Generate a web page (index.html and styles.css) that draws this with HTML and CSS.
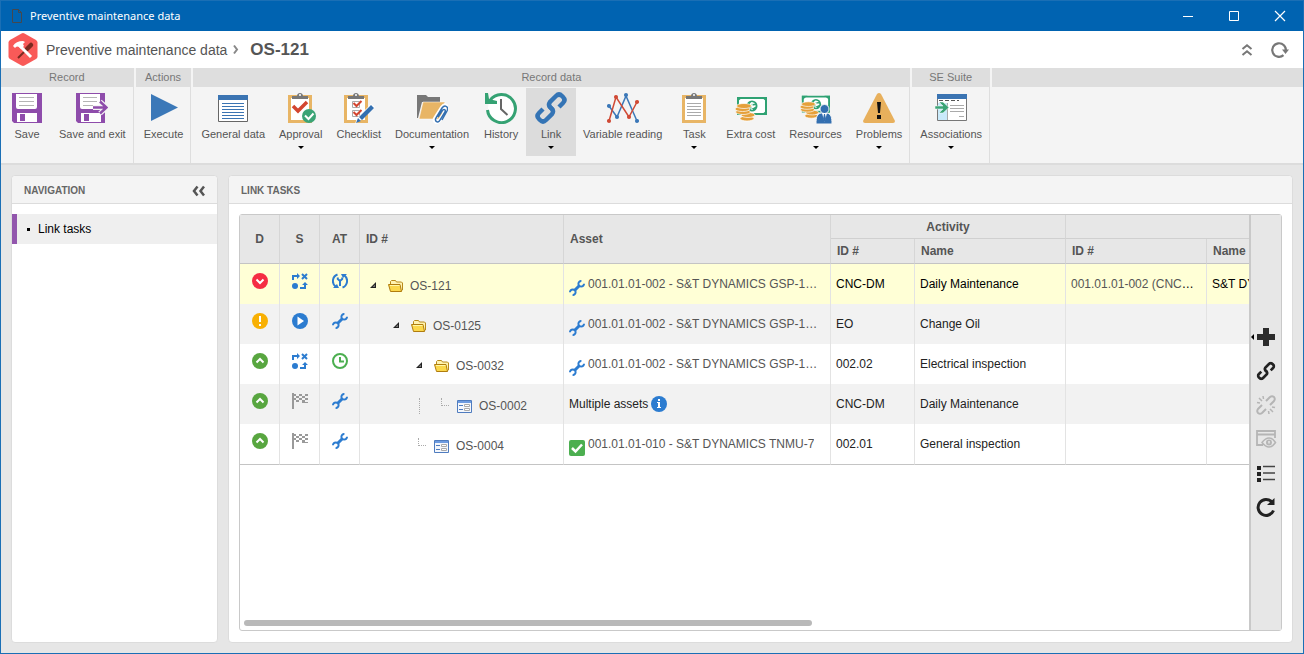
FILE: index.html
```html
<!DOCTYPE html>
<html lang="en">
<head>
<meta charset="utf-8">
<title>Preventive maintenance data</title>
<link rel="stylesheet" href="styles.css">
</head>
<body>
<svg class="sprite" aria-hidden="true">
  <symbol id="floppy" viewBox="0 0 32 32"><path fill="#8e4cab" d="M1 1h30v30H3l-2-2z"/><path fill="#fff" d="M5 2h21v13a2 2 0 0 1-2 2H7a2 2 0 0 1-2-2zM6 21h20v9H6z"/><path stroke="#b5b5b5" d="M8 5.500h15M8 9.500h15M8 13.500h15"/><path fill="#8e4cab" d="M9 22h5v7H9z"/></symbol>
  <symbol id="floppy-exit" viewBox="0 0 32 32"><path fill="#8e4cab" d="M0 1h29v30H2l-2-2z"/><path fill="#fff" d="M4 2h20v13a2 2 0 0 1-2 2H6a2 2 0 0 1-2-2zM5 21h20v9H5z"/><path stroke="#b5b5b5" d="M7 5.500h14M7 9.500h14M7 13.500h10"/><path fill="#8e4cab" d="M8 22h5v7H8z"/><path d="M17 15.500h13M24 9.500l6.500 6-6.500 6" fill="none" stroke="#f4f4f4" stroke-width="5"/><path d="M17 15.500h13M24 9.500l6.500 6-6.500 6" fill="none" stroke="#8e4cab" stroke-width="2.500"/></symbol>
  <symbol id="play" viewBox="0 0 32 32"><path fill="#3b78b8" d="M3 2l27 13.500L3 29z"/></symbol>
  <symbol id="general" viewBox="0 0 32 32"><path fill="#fff" stroke="#666" d="M1.500 3.500h29v26h-29z"/><path fill="#3b74b2" d="M1 3h30v5H1z"/><path stroke="#3b74b2" d="M5 11.500h22M5 14.500h22M5 17.500h22M5 20.500h22M5 23.500h22M5 26.500h22"/></symbol>
  <symbol id="board" viewBox="0 0 32 32"><path fill="#fff" stroke="#e8b565" stroke-width="3" d="M5.500 4.500h21v25h-21z"/><path fill="#777" d="M8 7V4h5c0-4 6-4 6 0h5v3z"/><circle cx="16" cy="3" r="1" fill="#fff"/></symbol>
  <symbol id="task" viewBox="0 0 32 32"><use href="#board"/><path stroke="#aaa" d="M9 11.500h14M9 14.500h14M9 17.500h14M9 20.500h14M9 23.500h14"/></symbol>
  <symbol id="approval" viewBox="0 0 32 32"><use href="#board" x="-1"/><path d="M8 14l5 5 9-9" fill="none" stroke="#d3452f" stroke-width="3.500"/><circle cx="24" cy="24" r="7" fill="#3ba476"/><path d="M20 23.500l3.500 3.500 5-5.500" fill="none" stroke="#fff" stroke-width="2"/></symbol>
  <symbol id="checklist" viewBox="0 0 32 32"><use href="#board" x="-3"/><path d="M9.500 9.500h7v6h-7zM9.500 18.500h7v6h-7z" fill="#fff" stroke="#aaa"/><path d="M10.500 11l3 3 5-5M10.500 20l3 3 5-5" fill="none" stroke="#d3452f" stroke-width="2"/><path d="M12 32l2-6L28 12l4 3-14 13z" fill="#fff"/><path d="M13 31l2-5 3 3zM16 25l12-12 3 3-12 12z" fill="#336fb0"/></symbol>
  <symbol id="docs" viewBox="0 0 32 32"><path fill="#777" d="M1 3h9l2 2h12v5H6L2 26H1z"/><path fill="#e8b565" stroke="#fff" stroke-width=".5" d="M7 10h22l-4 17H3z"/><path d="M20 25l5-7c2-3 5 0 3.500 3L23 29c-2 3-6 0-4-3l7-11c3-4 6-1 5 2l-5 9" fill="none" stroke="#fff" stroke-width="3.500"/><path d="M22 25l4-6c2-3 4-1 3 1l-5 8c-2 4-6 1-4-2l6-10c3-4 7-1 5 3l-5 9" fill="none" stroke="#336fb0" stroke-width="1.500"/></symbol>
  <symbol id="history" viewBox="0 0 32 32"><circle cx="16.500" cy="16" r="13.500" fill="#fff"/><path d="M5 8.500A14 14 0 1 1 2.500 18" fill="none" stroke="#35a273" stroke-width="3"/><path fill="#35a273" d="M0 1h3l1 6 8 2v3H0z"/><path d="M16 7v10l6.500 6" fill="none" stroke="#666" stroke-width="2"/></symbol>
  <symbol id="link" viewBox="0 0 32 32"><g fill="none" stroke="currentColor" stroke-width="4.500"><path d="M18 18l-3-3q-2-2 0-5l6-6q3-3 6 0l1 1q3 3 0 6l-4 4"/><path d="M14 14l3 3q2 2 0 5l-6 6q-3 3-6 0l-1-1q-3-3 0-6l4-4"/></g></symbol>
  <symbol id="chart" viewBox="0 0 32 32"><g fill="#3b78b8" stroke="#3b78b8" stroke-width="1.500"><path fill="none" d="M2 14l8 11L19 4l11 25"/><circle cx="2" cy="14" r="1.300"/><circle cx="10" cy="25" r="1.300"/><circle cx="19" cy="3" r="1.300"/><circle cx="30" cy="29" r="1.300"/></g><g fill="#d04a35" stroke="#d04a35" stroke-width="1.500"><path fill="none" d="M2 29L9 5l13 20 8-15"/><circle cx="2" cy="29" r="1.300"/><circle cx="9" cy="5" r="1.300"/><circle cx="22" cy="25" r="1.300"/><circle cx="30" cy="10" r="1.300"/></g></symbol>
  <symbol id="cash" viewBox="0 0 32 32"><path fill="#fff" stroke="#2fa273" stroke-width="2" d="M3 6h28v16H3z"/><path fill="#2fa273" d="M2 5h6l-6 5zM26 5h6v5zM32 18v5h-6z"/><circle cx="17" cy="14" r="5.500" fill="#2fa273"/><path d="M19.500 11.500q-4-1.500-4 .8t3.500 1.700-3.500 2.500M17 10v8" fill="none" stroke="#fff" stroke-width="1.200"/><g fill="#e5a03a" stroke="#fff" stroke-width=".7"><ellipse cx="12" cy="26.500" rx="7" ry="2.500"/><ellipse cx="13" cy="23" rx="7" ry="2.500"/><ellipse cx="8" cy="20" rx="7.500" ry="2.500"/><ellipse cx="7.500" cy="17" rx="7.500" ry="2.500"/><ellipse cx="9" cy="14" rx="7.500" ry="2.500"/></g></symbol>
  <symbol id="resources" viewBox="0 0 32 32"><use href="#cash" y="-2" width="30" height="32"/><g stroke="#f4f4f4"><path fill="#336fb0" d="M16 32c0-7 1-10 5-11h6c4 1 5 4 5 11z"/><circle cx="24.500" cy="17" r="4.500" fill="#336fb0"/></g><path fill="#fff" d="M22 21h5l-2.500 9z"/><path fill="#336fb0" d="M24 22h1l1 5-1.500 3-1.500-3z"/></symbol>
  <symbol id="warning" viewBox="0 0 32 32"><path fill="#e8b05c" d="M14 2q2-2 4 0l14 27q0 2-2 2H2q-2 0-2-2z"/><path fill="#111" d="M14 10h4l-1 11h-2zM14 23h4v4h-4z"/></symbol>
  <symbol id="assoc" viewBox="0 0 32 32"><path fill="#fff" stroke="#777" d="M2.500 2.500h29v26h-29z"/><path fill="#3b74b2" d="M2 2h30v5H2z"/><path fill="#c9eafb" d="M3 11h9v17H3z"/><path stroke="#555" stroke-dasharray="4 2" d="M4 8.500h20"/><path stroke="#aaa" d="M15 13.500h14M15 16.500h14M15 19.500h14M12.500 11v17M24 24.500h5"/><path fill="#3ba476" stroke="#fff" stroke-width=".5" d="M0 14h8l-4-4h4l6 5.500L8 21H4l4-4H0z"/></symbol>
  <symbol id="wrench" viewBox="0 0 16 16"><g fill="none" stroke="#2c7cd0"><path d="M5.500 10.500l5-5" stroke-width="3"/><path d="M12.400 1A2.800 2.800 0 1 0 15 3.700M3.600 15A2.800 2.800 0 1 0 1 12.300" stroke-width="2"/></g></symbol>
  <symbol id="high" viewBox="0 0 16 16"><circle cx="8" cy="8" r="8" fill="#f52d43"/><path d="M4.500 6.500L8 10l3.500-3.500" fill="none" stroke="#fff" stroke-width="2"/></symbol>
  <symbol id="medium" viewBox="0 0 16 16"><circle cx="8" cy="8" r="8" fill="#f8b003"/><path fill="#fff" d="M7 3h2v6H7zM7 11h2v2H7z"/></symbol>
  <symbol id="low" viewBox="0 0 16 16"><circle cx="8" cy="8" r="8" fill="#58a640"/><path d="M4.500 9.500L8 6l3.500 3.500" fill="none" stroke="#fff" stroke-width="2"/></symbol>
  <symbol id="flow" viewBox="0 0 16 16"><g fill="none" stroke="#2c7cd0" stroke-width="2"><path d="M1 7V3h5M10 1l5 5M15 1l-5 5M8 15h5v-4"/></g><path fill="#2c7cd0" d="M5 0l3 3-3 3zM10 12l3-3 3 3z"/><circle cx="3" cy="13" r="3" fill="#2c7cd0"/></symbol>
  <symbol id="started" viewBox="0 0 16 16"><circle cx="8" cy="8" r="8" fill="#2c7cd0"/><path fill="#fff" d="M5.500 3.500v9L12 8z"/></symbol>
  <symbol id="flag" viewBox="0 0 16 16"><g fill="#9a9a9a"><path d="M0 0h2v16H0z"/><path d="M2 1h2v2H2zM2 5h2v2H2zM4 3h3v2H4zM7 1h3v2H7zM7 5h3v2H7zM10 3h3v2h-3zM13 1h3v2h-3zM13 5h3v2h-3zM4 7h3v2H4zM10 7h3v3h-3zM13 9h3v1h-3z"/></g></symbol>
  <symbol id="cycle" viewBox="0 0 16 16"><g fill="none" stroke="#2c7cd0" stroke-width="2"><path d="M5.500 1.500A7 7 0 0 0 3.500 13.500M10.500 14.500A7 7 0 0 0 12.500 2.500"/><path d="M5.800 4.500v1.500L8 8l2.200-2V4.500M8 8v5"/></g><path fill="#2c7cd0" d="M1 15h6l-2-4zM15 1H9l2 4z"/></symbol>
  <symbol id="clock" viewBox="0 0 16 16"><circle cx="8" cy="8" r="7" fill="none" stroke="#4caf50" stroke-width="2"/><path d="M8 4v4.500h4" fill="none" stroke="#4caf50" stroke-width="2"/></symbol>
  <symbol id="folder" viewBox="0 0 16 16"><path fill="#fff3b0" stroke="#b8891a" d="M2.500 7V3.500l1-1h4l1 1.500h5l1 1V12l-2 1.500H3"/><path fill="#fbd84c" stroke="#b07c0e" d="M.500 6.500h11.500l1.500 7H2.500z"/><path stroke="#fff7a8" d="M2 7.500h9.500"/></symbol>
  <symbol id="form" viewBox="0 0 16 16"><path fill="#f4f7fc" stroke="#4f7cbf" d="M.500 2.500h14v12H.500z"/><path fill="#6d9be0" d="M1 3h13v2H1z"/><path fill="#4f7cbf" d="M2 7h4v1H2zM2 11h4v1H2z"/><path fill="#fff" stroke="#aaa" d="M7.500 6.500h5v2h-5zM7.500 10.500h5v2h-5z"/></symbol>
  <symbol id="tri" viewBox="0 0 6 6"><path fill="#222" d="M6 0v6H0z"/><path fill="#777" d="M5 2.500V5H2.500z"/></symbol>
  <symbol id="info" viewBox="0 0 16 16"><circle cx="8" cy="8" r="8" fill="#2c7cd0"/><path fill="#fff" d="M7 3h2v2H7zM6 6h3v5h1v1H6v-1h1V7H6z"/></symbol>
  <symbol id="ok" viewBox="0 0 16 16"><rect width="16" height="16" rx="2" fill="#4caf50"/><path d="M3 8l3.500 3.500L13 4.500" fill="none" stroke="#fff" stroke-width="2.500"/></symbol>
</svg>

<div class="window">
  <header class="titlebar">
    <svg class="doc-icon" width="10" height="14" viewBox="0 0 10 14"><path d="M.5 .5h6l3 3v10h-9zM6.500 .5v3h3" fill="none" stroke="#44484e"/></svg>
    <span class="titlebar-text">Preventive maintenance data</span>
    <button class="win-btn" aria-label="Minimize"><svg width="10" height="10"><path d="M0 5.500h10" stroke="#fff"/></svg></button>
    <button class="win-btn" aria-label="Maximize"><svg width="10" height="10"><path d="M.5 .5h9v9h-9z" fill="none" stroke="#fff"/></svg></button>
    <button class="win-btn" aria-label="Close"><svg width="10" height="10"><path d="M0 0l10 10M10 0L0 10" stroke="#fff" stroke-width="1.200"/></svg></button>
  </header>

  <div class="pagebar">
    <svg class="app-icon" width="30" height="34" viewBox="0 0 30 34"><path fill="#f95a58" d="M13.500 .5q1.500-.8 3 0l11.500 6.500q1.500 1 1.500 2.500v14q0 1.500-1.500 2.500l-11.500 6.500q-1.500.8-3 0L2 26Q.5 25 .5 23.500v-14Q.5 8 2 7z"/><path d="M23 12l-4 4" stroke="#7a2a20" stroke-width="4.500" stroke-linecap="round"/><path d="M19 16l-9 9" stroke="#7a2a20" stroke-width="2"/><path d="M12 13l11 11" stroke="#fff" stroke-width="3"/><path fill="#fff" d="M5 13q3-5 10-5l2 1-2 2 1 2-3 3-2-2q-2-1-3 0l-1 1z"/></svg>
    <span class="crumb">Preventive maintenance data</span>
    <svg class="crumb-sep" width="6" height="9"><path d="M1 .5l3 4-3 4" fill="none" stroke="#888" stroke-width="2"/></svg>
    <h1 class="crumb-current">OS-121</h1>
    <button class="bar-btn" aria-label="Collapse ribbon"><svg width="10" height="12" viewBox="0 0 10 12"><path d="M.5 5L5 1.200 9.500 5M.5 11L5 7.200 9.500 11" fill="none" stroke="#777" stroke-width="2"/></svg></button>
    <button class="bar-btn" aria-label="Refresh"><svg width="18" height="16" viewBox="0 0 18 16"><path d="M14.800 9A6.800 6.800 0 1 0 12.500 13.200" fill="none" stroke="#777" stroke-width="2.200"/><path fill="#777" d="M11 7.500h7L14.500 12z"/></svg></button>
  </div>

  <nav class="ribbon" aria-label="Ribbon">
    <section class="group"><h2>Record</h2><div class="tools">
      <button class="tool"><svg><use href="#floppy"/></svg>Save</button>
      <button class="tool"><svg><use href="#floppy-exit"/></svg>Save and exit</button>
    </div></section>
    <section class="group"><h2>Actions</h2><div class="tools">
      <button class="tool"><svg><use href="#play"/></svg>Execute</button>
    </div></section>
    <section class="group"><h2>Record data</h2><div class="tools">
      <button class="tool"><svg><use href="#general"/></svg>General data</button>
      <button class="tool drop"><svg><use href="#approval"/></svg>Approval</button>
      <button class="tool"><svg><use href="#checklist"/></svg>Checklist</button>
      <button class="tool drop"><svg><use href="#docs"/></svg>Documentation</button>
      <button class="tool"><svg><use href="#history"/></svg>History</button>
      <button class="tool drop active"><svg class="blue"><use href="#link"/></svg>Link</button>
      <button class="tool"><svg><use href="#chart"/></svg>Variable reading</button>
      <button class="tool drop"><svg><use href="#task"/></svg>Task</button>
      <button class="tool"><svg><use href="#cash"/></svg>Extra cost</button>
      <button class="tool drop"><svg><use href="#resources"/></svg>Resources</button>
      <button class="tool drop"><svg><use href="#warning"/></svg>Problems</button>
    </div></section>
    <section class="group"><h2>SE Suite</h2><div class="tools">
      <button class="tool drop"><svg><use href="#assoc"/></svg>Associations</button>
    </div></section>
    <div class="group filler"><div class="strip"></div></div>
  </nav>

  <div class="content">
    <aside class="panel nav-panel">
      <div class="panel-head"><h2>NAVIGATION</h2>
        <button class="bar-btn" aria-label="Collapse navigation"><svg width="13" height="10"><path d="M5.500 .5L2 5l3.500 4.500M12 .5L8.500 5l3.500 4.500" fill="none" stroke="#555" stroke-width="2.500"/></svg></button>
      </div>
      <ul class="nav-list"><li><a class="nav-item" href="#">Link tasks</a></li></ul>
    </aside>

    <main class="panel main-panel">
      <div class="panel-head"><h2>LINK TASKS</h2></div>
      <div class="grid-box">
        <div class="grid-view">
          <table class="grid">
            <colgroup><col class="c-icon"><col class="c-icon"><col class="c-icon"><col class="c-tree"><col class="c-asset"><col class="c-code"><col class="c-name"><col class="c-ref"><col class="c-last"></colgroup>
            <thead>
              <tr><th rowspan="2" class="mid">D</th><th rowspan="2" class="mid">S</th><th rowspan="2" class="mid">AT</th><th rowspan="2">ID #</th><th rowspan="2">Asset</th><th colspan="2" class="mid span">Activity</th><th colspan="2" class="span"></th></tr>
              <tr><th>ID #</th><th>Name</th><th>ID #</th><th>Name</th></tr>
            </thead>
            <tbody>
              <tr class="selected">
                <td class="ico"><svg><use href="#high"/></svg></td><td class="ico"><svg><use href="#flow"/></svg></td><td class="ico"><svg><use href="#cycle"/></svg></td>
                <td><div class="tree"><i class="slot"><svg class="tri"><use href="#tri"/></svg></i><svg><use href="#folder"/></svg><span>OS-121</span></div></td>
                <td><div class="asset"><svg><use href="#wrench"/></svg><a href="#">001.01.01-002 - S&amp;T DYNAMICS GSP-1000</a></div></td>
                <td>CNC-DM</td><td>Daily Maintenance</td><td class="ref"><a href="#">001.01.01-002 (CNC-DM)</a></td><td>S&amp;T DYNAMICS</td>
              </tr>
              <tr>
                <td class="ico"><svg><use href="#medium"/></svg></td><td class="ico"><svg><use href="#started"/></svg></td><td class="ico"><svg><use href="#wrench"/></svg></td>
                <td><div class="tree"><i class="slot"></i><i class="slot"><svg class="tri"><use href="#tri"/></svg></i><svg><use href="#folder"/></svg><span>OS-0125</span></div></td>
                <td><div class="asset"><svg><use href="#wrench"/></svg><a href="#">001.01.01-002 - S&amp;T DYNAMICS GSP-1000</a></div></td>
                <td>EO</td><td>Change Oil</td><td></td><td></td>
              </tr>
              <tr>
                <td class="ico"><svg><use href="#low"/></svg></td><td class="ico"><svg><use href="#flow"/></svg></td><td class="ico"><svg><use href="#clock"/></svg></td>
                <td><div class="tree"><i class="slot"></i><i class="slot"></i><i class="slot"><svg class="tri"><use href="#tri"/></svg></i><svg><use href="#folder"/></svg><span>OS-0032</span></div></td>
                <td><div class="asset"><svg><use href="#wrench"/></svg><a href="#">001.01.01-002 - S&amp;T DYNAMICS GSP-1000</a></div></td>
                <td>002.02</td><td>Electrical inspection</td><td></td><td></td>
              </tr>
              <tr>
                <td class="ico"><svg><use href="#low"/></svg></td><td class="ico"><svg><use href="#flag"/></svg></td><td class="ico"><svg><use href="#wrench"/></svg></td>
                <td><div class="tree"><i class="slot"></i><i class="slot"></i><i class="slot line"></i><i class="slot elbow"></i><svg><use href="#form"/></svg><span>OS-0002</span></div></td>
                <td><div class="multi">Multiple assets<svg><use href="#info"/></svg></div></td>
                <td>CNC-DM</td><td>Daily Maintenance</td><td></td><td></td>
              </tr>
              <tr>
                <td class="ico"><svg><use href="#low"/></svg></td><td class="ico"><svg><use href="#flag"/></svg></td><td class="ico"><svg><use href="#wrench"/></svg></td>
                <td><div class="tree"><i class="slot"></i><i class="slot"></i><i class="slot elbow"></i><svg><use href="#form"/></svg><span>OS-0004</span></div></td>
                <td><div class="asset"><svg><use href="#ok"/></svg><a href="#">001.01.01-010 - S&amp;T DYNAMICS TNMU-7</a></div></td>
                <td>002.01</td><td>General inspection</td><td></td><td></td>
              </tr>
            </tbody>
          </table>
          <div class="scroll-track"><div class="scroll-thumb"></div></div>
        </div>
        <div class="side-tools">
          <button class="side-btn add" aria-label="Add"><svg width="18" height="18"><path fill="#2b2b2b" d="M6 0h6v6h6v6h-6v6H6v-6H0V6h6z"/></svg></button>
          <button class="side-btn" aria-label="Associate"><svg width="20" height="20" viewBox="-1 -1 34 34"><use href="#link" width="32" height="32"/></svg></button>
          <button class="side-btn" aria-label="Disassociate" disabled><svg width="20" height="20" viewBox="0 0 20 20"><g fill="none" stroke="currentColor" stroke-width="2"><path d="M10 6l4-4q2-1.500 4 0 1.500 2 0 4l-4 4M6 10l-4 4q-1.500 2 0 4 2 1.500 4 0l4-4"/><path stroke-width="1.500" d="M3 3l3 3M7 1l.5 3M1 7.500l3 .5M14 14l3 3M12.500 16l.5 3M16 12l3 .5"/></g></svg></button>
          <button class="side-btn" aria-label="View" disabled><svg width="20" height="18" viewBox="0 0 20 18"><path d="M7 15H1V1h18v7M1 4.500h18" fill="none" stroke="currentColor" stroke-width="1.800"/><path d="M6 12.500q3.500-4.500 7-4.500t6.500 4.500q-3 4.500-6.500 4.500t-7-4.500z" fill="#e7e7e7" stroke="currentColor" stroke-width="1.500"/><circle cx="13" cy="12.500" r="3" fill="currentColor"/><path d="M13 11v2.500" stroke="#fff"/></svg></button>
          <button class="side-btn" aria-label="List"><svg width="18" height="17" viewBox="0 0 18 17"><path fill="#222" d="M0 1h4v4H0zM0 7h4v4H0zM0 13h4v4H0z"/><path stroke="#444" stroke-width="1.500" d="M6 1.500h12M6 8h12M6 14.500h12"/></svg></button>
          <button class="side-btn" aria-label="Reload"><svg width="20" height="20" viewBox="0 0 20 20"><path d="M16 5A8 8 0 1 0 17.500 13.500" fill="none" stroke="#222" stroke-width="3"/><path fill="#222" d="M18.500 1v7h-7.500z"/></svg></button>
        </div>
      </div>
    </main>
  </div>
</div>
</body>
</html>
```

FILE: styles.css
```css
* { box-sizing: border-box; }
body {
  margin: 0;
  font: 12px/16px "Liberation Sans", Arial, sans-serif;
  color: #222;
}
svg { display: block; flex: none; overflow: visible; }
.sprite { position: absolute; width: 0; height: 0; }
button { border: 0; padding: 0; margin: 0; background: none; font: inherit; color: inherit; }
h1, h2 { margin: 0; }
a { color: #555; text-decoration: none; }

.window {
  min-height: 100vh;
  display: flex;
  flex-direction: column;
  border: 1px solid #1a6fb5;
  background: #e6e6e6;
}

.titlebar { display: flex; align-items: center; height: 30px; padding-left: 11px; background: #0063b1; color: #fff; }
.titlebar-text { flex: 1; margin-left: 8px; font: 11px/16px "Noto Sans", sans-serif; }
.win-btn { width: 46px; height: 30px; display: flex; align-items: center; justify-content: center; }

.pagebar { display: flex; align-items: center; height: 37px; padding: 0 14px 0 7px; background: #fff; color: #555; }
.crumb { margin-left: 8px; font-size: 14px; }
.crumb-sep { margin: 0 11px 0 6px; }
.crumb-current { flex: 1; font-size: 17px; }
.bar-btn { display: flex; align-items: center; justify-content: center; }
.pagebar .bar-btn + .bar-btn { margin-left: 19px; }

.ribbon { display: flex; background: #f4f4f4; border-bottom: 2px solid #dcdcdc; }
.group { display: flex; flex-direction: column; height: 95px; margin-right: 2px; border-right: 1px solid #dedede; }
.group h2, .strip { height: 19px; background: #dedede; color: #777; font-size: 11px; font-weight: 400; line-height: 19px; text-align: center; }
.filler { flex: 1; margin: 0; border: 0; }
.tools { display: flex; padding: 1px 0 0 1px; }
.tool {
  min-width: 50px;
  height: 68px;
  padding: 4px 7px 0;
  display: flex;
  flex-direction: column;
  align-items: center;
  gap: 3px;
  font-size: 11px;
  line-height: 14px;
  color: #555;
  white-space: nowrap;
}
.tool svg { width: 32px; height: 32px; }
.tool .blue { color: #3474b5; }
.tool.active { background: #dcdcdc; }
.drop::after { content: ""; margin-top: 2px; border: 3px solid transparent; border-top-color: #000; border-bottom: 0; }

.content { flex: 1; display: flex; gap: 10px; padding: 10px; }
.panel { display: flex; flex-direction: column; background: #fff; border: 1px solid #dcdcdc; border-radius: 4px; }
.nav-panel { width: 207px; flex: none; }
.main-panel { flex: 1; min-width: 0; }
.panel-head { display: flex; align-items: center; justify-content: space-between; height: 28px; padding: 2px 12px 0; background: #f4f4f4; border-bottom: 1px solid #dcdcdc; border-radius: 4px 4px 0 0; }
.panel-head h2 { font-size: 10px; line-height: 14px; color: #666; }

.nav-list { list-style: none; margin: 10px 0 0; padding: 0; }
.nav-item { display: flex; align-items: center; gap: 8px; height: 30px; padding-left: 10px; border-left: 5px solid #9256ad; background: #efefef; color: #000; }
.nav-item::before { content: ""; width: 3px; height: 3px; background: #000; }

.grid-box { flex: 1; display: flex; margin: 10px 10px 11px; border: 1px solid #c9c9c9; border-radius: 3px; }
.grid-view { flex: 1; min-width: 0; display: flex; flex-direction: column; justify-content: space-between; overflow: hidden; }
.grid { width: 1157px; table-layout: fixed; border-collapse: separate; border-spacing: 0; }
.c-icon { width: 40px; }
.c-tree { width: 204px; }
.c-asset { width: 267px; }
.c-code { width: 84px; }
.c-name { width: 151px; }
.c-ref { width: 141px; }
.c-last { width: 190px; }
.grid th { height: 25px; padding: 0 6px; background: #e7e7e7; border-right: 1px solid #d6d6d6; border-bottom: 1px solid #c4c4c4; color: #555; text-align: left; }
.grid .span { height: 24px; border-bottom-color: #d0d0d0; }
.grid .mid { text-align: center; }
.grid td { height: 40px; padding: 0 5px 1px; border-right: 1px solid #e3e3e3; white-space: nowrap; overflow: hidden; text-overflow: ellipsis; }
.grid td.ref { padding-right: 10px; }
.grid tr:nth-child(even) td { background: #f2f2f2; }
.grid .selected td { background: #ffffd6; color: #000; }
.grid tr:last-child td { height: 41px; border-bottom: 1px solid #c4c4c4; }
.grid svg { width: 16px; height: 16px; }
.grid td.ico { padding: 0 11px 6px 12px; }
.tree { display: flex; align-items: center; padding-top: 4px; color: #555; }
.grid .selected .tree { color: #555; }
.tree span { margin-left: 6px; }
.slot { width: 23px; height: 16px; }
.grid .tri { width: 6px; height: 6px; margin: 4px 5px; }
.line { border-left: 1px dotted #aaa; margin-left: 8px; width: 15px; }
.elbow { border-left: 1px dotted #aaa; border-bottom: 1px dotted #aaa; width: 8px; height: 8px; margin: 0 8px 8px 7px; }
.asset { display: flex; align-items: center; gap: 3px; padding-right: 5px; }
.asset svg { margin-top: 8px; }
.asset a { overflow: hidden; text-overflow: ellipsis; }
.multi { display: flex; align-items: center; gap: 3px; }

.scroll-track { padding: 4px; }
.scroll-thumb { width: 56.7%; height: 6px; border-radius: 3px; background: #b9b9b9; }

.side-tools { width: 32px; display: flex; flex-direction: column; padding-top: 105px; background: #e7e7e7; border-left: 2px solid #c9c9c9; }
.side-btn { display: flex; align-items: center; justify-content: center; height: 34px; color: #222; }
.side-btn:disabled { color: #b5b5b5; }
.add { position: relative; }
.add::before { content: ""; position: absolute; left: 0; top: 14px; border: 3px solid transparent; border-right-color: #000; border-left: 0; }
```
